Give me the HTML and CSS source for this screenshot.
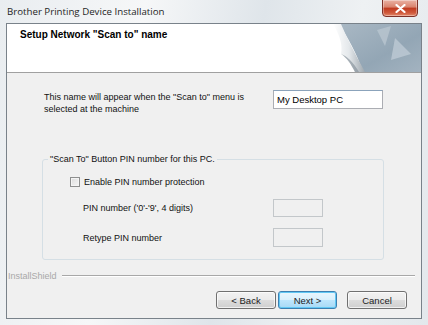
FILE: index.html
```html
<!DOCTYPE html>
<html lang="en">
<head>
  <meta charset="UTF-8" />
  <title>Brother Printing Device Installation</title>
  <link rel="stylesheet" href="styles.css">
</head>
<body>
  <div class="window">
    <div class="titlebar">
      <span class="caption">Brother Printing Device Installation</span>
      <button class="close" type="button" aria-label="Close">
        <svg width="11" height="9" viewBox="0 0 11 9">
          <path d="M1.5 1 L9.5 8 M9.5 1 L1.5 8" stroke="#fff" stroke-width="2.2" stroke-linecap="round" />
        </svg>
      </button>
    </div>

    <div class="client">
      <!-- cabecera blanca con la hoja doblada -->
      <div class="header">
        <h1 class="step">Setup Network "Scan to" name</h1>
        <svg class="curl" width="88" height="48" viewBox="0 0 88 48">
          <defs>
            <linearGradient id="bg" x1="0" y1="0" x2="1" y2="1">
              <stop offset="0" stop-color="#a9b8c4" />
              <stop offset="0.6" stop-color="#93a6b5" />
              <stop offset="1" stop-color="#a3b3c0" />
            </linearGradient>
            <linearGradient id="pg" x1="0" y1="0" x2="1" y2="0">
              <stop offset="0" stop-color="#ffffff" />
              <stop offset="0.5" stop-color="#e4e8eb" />
              <stop offset="1" stop-color="#9ea7ae" />
            </linearGradient>
          </defs>
          <path d="M6 0 H88 V48 H30 C24 30 14 12 6 0 Z" fill="url(#bg)" />
          <path d="M44 6 L58 2 L52 22 Z" fill="#b9c6d0" opacity="0.8" />
          <path d="M62 14 L78 30 L58 36 Z" fill="#c3cfd8" opacity="0.7" />
          <path d="M0 0 H8 C14 14 22 30 32 48 H22 C18 40 14 34 8 30 C10 20 6 10 0 0 Z" fill="url(#pg)" />
          <path d="M22 48 C18 40 14 34 8 30 C14 32 20 38 26 48 Z" fill="#7e8a94" opacity="0.6" />
        </svg>
      </div>

      <div class="body">
        <div class="name-row">
          <p class="name-text">This name will appear when the "Scan to" menu is selected at the machine</p>
          <input class="text-box" type="text" value="My Desktop PC" />
        </div>

        <fieldset class="group">
          <legend>"Scan To" Button PIN number for this PC.</legend>
          <label class="check-row">
            <span class="check"></span>
            Enable PIN number protection
          </label>
          <div class="pin-row">
            <span class="pin-label">PIN number ('0'-'9', 4 digits)</span>
            <input class="pin-box" type="text" disabled />
          </div>
          <div class="pin-row retype">
            <span class="pin-label">Retype PIN number</span>
            <input class="pin-box" type="text" disabled />
          </div>
        </fieldset>

        <div class="brand">
          <span>InstallShield</span>
          <span class="rule"></span>
        </div>

        <div class="buttons">
          <button class="btn" type="button">&lt; Back</button>
          <button class="btn default" type="button">Next &gt;</button>
          <button class="btn cancel" type="button">Cancel</button>
        </div>
      </div>
    </div>
  </div>
</body>
</html>
```

FILE: styles.css
```css
body {
  margin: 0;
  width: 428px;
  height: 325px;
  overflow: hidden;
  font-family: 'Liberation Sans', Arial, sans-serif;
  background: linear-gradient(100deg, #e9edf0 0%, #f6f7f8 30%, #dfe5ea 55%, #eef1f3 75%, #e3e8ec 100%);
}
.window {
  height: 100%;
}
.titlebar {
  height: 23px;
  display: flex;
  justify-content: space-between;
  align-items: flex-start;
  padding: 0 10px 0 7px;
}
.caption {
  font-family: 'Open Sans', 'DejaVu Sans', sans-serif;
  font-size: 9.7px;
  line-height: 14px;
  margin-top: 5px;
  color: #1e1e1e;
}
.close {
  width: 36px;
  height: 18px;
  margin-top: -1px;
  padding: 0;
  border: 1px solid #7d3128;
  border-radius: 0 0 4px 4px;
  background: linear-gradient(#eab2a4 0%, #d9826c 45%, #c0391f 50%, #cf5a3c 80%, #e38a6c 100%);
  display: flex;
  align-items: center;
  justify-content: center;
  box-shadow: inset 0 0 0 1px rgb(255 255 255 / 0.35);
}
.client {
  margin: 0 6px;
  height: 294px;
  border: 1px solid #79828a;
  background-color: #f0f0f0;
  display: flex;
  flex-direction: column;
}
.header {
  height: 48px;
  background-color: #fff;
  border-bottom: 1px solid #a0a0a0;
  display: flex;
  justify-content: space-between;
}
h1.step {
  margin: 0;
  padding: 4px 0 0 13px;
  font-size: 10px;
  line-height: 14px;
  font-weight: 700;
  color: #000;
}
.curl {
  flex: none;
}
.body {
  flex: 1;
  font-size: 9px;
  color: #111;
}
.name-row {
  display: flex;
  align-items: flex-start;
  margin-top: 17px;
  padding-left: 37px;
}
p.name-text {
  margin: 0;
  width: 229px;
  line-height: 12px;
  padding-top: 1px;
}
.text-box {
  width: 110px;
  height: 19px;
  box-sizing: border-box;
  margin: 0;
  padding: 0 3px;
  border: 1px solid #abadb3;
  border-top-color: #8ba3bb;
  background: #fff;
  font-family: inherit;
  font-size: 9.5px;
  color: #000;
}
fieldset.group {
  margin: 38px 0 0 35px;
  width: 342px;
  box-sizing: border-box;
  min-width: 0;
  padding: 0 0 12px 0;
  border: 1px solid #d5dfe5;
  border-radius: 3px;
}
fieldset.group legend {
  margin-left: 5px;
  padding: 0 2px;
  line-height: 12px;
}
.check-row {
  display: flex;
  align-items: center;
  gap: 4px;
  height: 12px;
  margin-top: 11px;
  padding-left: 27px;
}
.check {
  width: 10px;
  height: 10px;
  box-sizing: border-box;
  border: 1px solid #8e8f8f;
  background: linear-gradient(135deg, #dcdcdc, #f6f6f6);
  box-shadow: inset 0 0 0 1px #f4f4f4;
}
.pin-row {
  display: flex;
  align-items: center;
  margin-top: 11px;
  padding-left: 40px;
}
.pin-label {
  width: 190px;
}
.pin-box {
  width: 50px;
  height: 18px;
  box-sizing: border-box;
  margin: 0;
  border: 1px solid #c3c7ca;
  background: #f0f0f0;
}
.retype .pin-box {
  height: 19px;
}
.brand {
  display: flex;
  align-items: center;
  gap: 5px;
  margin-top: 10px;
  padding: 0 6px 0 1px;
  height: 12px;
  color: #a8a8a8;
}
.rule {
  flex: 1;
  border-top: 1px solid #a8a8a8;
  border-bottom: 1px solid #fff;
}
.buttons {
  display: flex;
  justify-content: flex-end;
  margin-top: 9px;
  padding-right: 14px;
}
.btn {
  width: 60px;
  height: 18px;
  margin: 0 0 0 2px;
  padding: 0;
  border: 1px solid #707070;
  border-radius: 3px;
  background: linear-gradient(#f2f2f2 0%, #ebebeb 48%, #dddddd 50%, #cfcfcf 100%);
  box-shadow: inset 0 0 0 1px rgb(255 255 255 / 0.7);
  font-family: inherit;
  font-size: 9.5px;
  color: #222;
}
.btn.default {
  width: 59px;
  border-color: #3c7fb1;
  background: linear-gradient(#eaf6fd 0%, #d9f0fc 48%, #bee6fd 50%, #a7d9f5 100%);
  box-shadow: inset 0 0 0 1px #62c8f4;
}
.btn.cancel {
  margin-left: 10px;
}
```
